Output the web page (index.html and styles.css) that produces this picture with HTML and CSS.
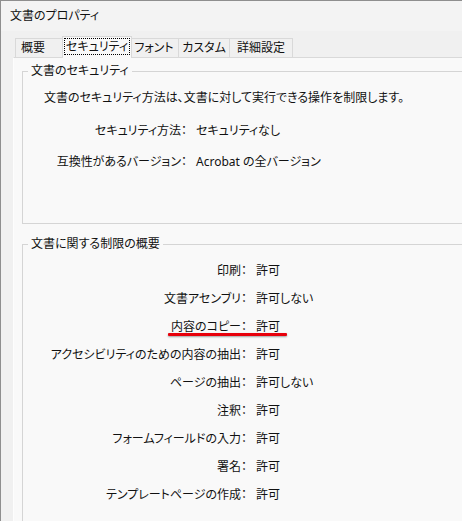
FILE: index.html
```html
<!DOCTYPE html>
<html lang="ja">
<head>
    <meta charset="UTF-8">
    <meta name="viewport" content="width=device-width, initial-scale=1.0">
    <title>文書のプロパティ</title>
    <link rel="stylesheet" href="styles.css">
</head>
<body>
    <div class="window">
        <div class="titlebar">文書のプロパティ</div>
        <div class="dialog">
            <div class="tabs">
                <div class="tab tab-summary">概要</div>
                <div class="tab active"><span class="focus">セキュリティ</span></div>
                <div class="tab tab-fonts">フォント</div>
                <div class="tab tab-custom">カスタム</div>
                <div class="tab tab-advanced">詳細設定</div>
            </div>
            <div class="panel">
                <fieldset class="group security">
                    <legend>文書のセキュリティ</legend>
                    <p class="desc">文書のセキュリティ方法は、文書に対して実行できる操作を制限します。</p>
                    <div class="row"><span class="label">セキュリティ方法：</span><span class="value">セキュリティなし</span></div>
                    <div class="row"><span class="label">互換性があるバージョン：</span><span class="value">Acrobat の全バージョン</span></div>
                </fieldset>
                <fieldset class="group limits">
                    <legend>文書に関する制限の概要</legend>
                    <div class="row"><span class="label">印刷：</span><span class="value">許可</span></div>
                    <div class="row"><span class="label">文書アセンブリ：</span><span class="value">許可しない</span></div>
                    <div class="row marked"><span class="label">内容のコピー：</span><span class="value">許可</span></div>
                    <div class="row"><span class="label">アクセシビリティのための内容の抽出：</span><span class="value">許可</span></div>
                    <div class="row"><span class="label">ページの抽出：</span><span class="value">許可しない</span></div>
                    <div class="row"><span class="label">注釈：</span><span class="value">許可</span></div>
                    <div class="row"><span class="label">フォームフィールドの入力：</span><span class="value">許可</span></div>
                    <div class="row"><span class="label">署名：</span><span class="value">許可</span></div>
                    <div class="row"><span class="label">テンプレートページの作成：</span><span class="value">許可</span></div>
                </fieldset>
            </div>
        </div>
    </div>
</body>
</html>
```

FILE: styles.css
```css
* {
    box-sizing: border-box;
}
html, body {
    margin: 0;
    height: 100%;
    overflow: hidden;
}
body {
    font-family: "Noto Sans", "Noto Sans CJK JP", sans-serif;
    font-size: 12px;
    font-feature-settings: "palt";
    color: #111;
    background-color: #f0f0f0;
}
.window {
    height: 100%;
    border-top: 1px solid #8e8e8e;
    border-left: 1px solid #8e8e8e;
}
.titlebar {
    height: 30px;
    line-height: 30px;
    padding-left: 9px;
    background-color: #f3f3f3;
}
.dialog {
    height: calc(100% - 30px);
    padding-left: 12px;
    display: flex;
    flex-direction: column;
}
.tabs {
    display: flex;
    align-items: flex-end;
    height: 26px;
    padding-left: 3px;
    flex-shrink: 0;
}
.tab {
    flex: none;
    height: 19px;
    line-height: 18px;
    margin-left: -1px;
    text-align: center;
    border: 1px solid #d9d9d9;
    border-bottom: none;
    background-color: #f0f0f0;
}
.tab-summary {
    width: 49px;
    padding-left: 5px;
    text-align: left;
}
.tab-fonts {
    width: 50px;
}
.tab-custom {
    width: 52px;
}
.tab-advanced {
    width: 64px;
}
.tab.active {
    position: relative;
    z-index: 1;
    width: 70px;
    height: 22px;
    margin: 0 -2px -1px -2px;
    padding: 1px 1px 0;
    text-align: left;
    background-color: #f9f9f9;
}
.focus {
    display: block;
    width: 66px;
    line-height: 15px;
    text-align: center;
    border: 1px dotted #000;
}
.panel {
    flex: 1;
    overflow: hidden;
    padding-left: 8px;
    border-top: 1px solid #d9d9d9;
    border-left: 1px solid #fdfdfd;
    background-color: #f9f9f9;
}
.group {
    width: 480px;
    margin: 5px 0 0;
    padding: 0;
    border: 1px solid #d5d5d5;
}
.group legend {
    margin-left: 5px;
    padding: 0 3px;
    line-height: 16px;
}
.security {
    height: 161px;
}
.limits {
    margin-top: 12px;
    padding-top: 5px;
    height: 300px;
}
.desc {
    margin: 11px 0 9px;
    padding-left: 21px;
    line-height: 16px;
}
.row {
    position: relative;
    display: flex;
}
.security .row {
    height: 31px;
    line-height: 31px;
}
.security .label {
    width: 164px;
}
.limits .row {
    height: 28px;
    line-height: 28px;
}
.limits .label {
    width: 224px;
}
.label {
    text-align: right;
    flex-shrink: 0;
}
.value {
    padding-left: 9px;
}
/* red marker under the copy row */
.row.marked::after {
    content: "";
    position: absolute;
    left: 145px;
    top: 20px;
    width: 119px;
    height: 3px;
    border-radius: 1px;
    background-color: #e8000b;
    box-shadow: 0 1px 2px rgba(0, 0, 0, 0.35);
}
```
